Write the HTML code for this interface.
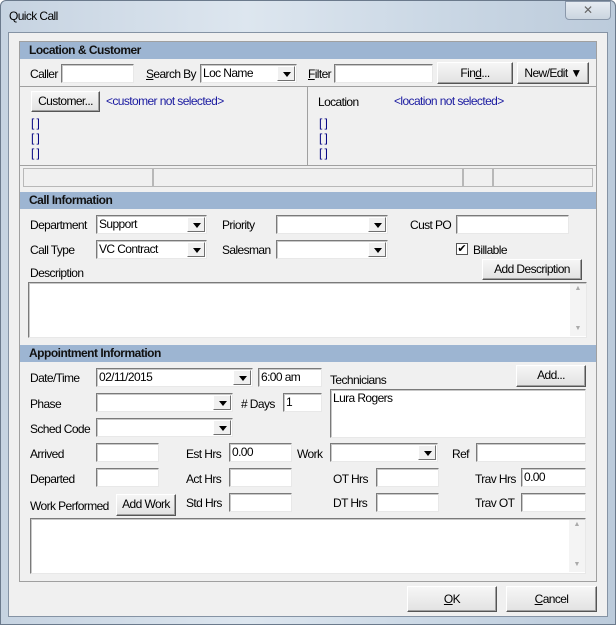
<!DOCTYPE html>
<html><head><style>
*{box-sizing:border-box;margin:0;padding:0}
body{width:616px;height:625px;overflow:hidden;background:#fff;font-family:"Liberation Sans",sans-serif;font-size:12px;color:#000;position:relative}
.a{position:absolute}
.l{position:absolute;line-height:14px;white-space:nowrap;letter-spacing:-0.6px}
.in{position:absolute;background:#fff;border:1px solid;border-color:#7a7a7a #e8e8e8 #e8e8e8 #7a7a7a;box-shadow:inset 1px 1px 0 #c8c8c8;padding:1px 2px;line-height:14px;letter-spacing:-0.6px;white-space:nowrap}
.cb:after{content:"";position:absolute;right:1px;top:1px;bottom:1px;width:16px;background:#f0f0f0;border:1px solid;border-color:#fff #707070 #707070 #fff}
.cb:before{content:"";position:absolute;right:5px;top:50%;margin-top:-2px;border-left:4px solid transparent;border-right:4px solid transparent;border-top:5px solid #000;z-index:2}
.bt{position:absolute;background:linear-gradient(#f6f6f6,#e2e2e2);border:1px solid;border-color:#fff #555 #555 #fff;box-shadow:inset -1px -1px 0 #a0a0a0;text-align:center;letter-spacing:-0.6px;white-space:nowrap}
.hd{position:absolute;left:20px;width:576px;height:17px;background:#9db5d2;font-weight:bold;padding-left:9px;line-height:17px;color:#111;letter-spacing:-0.5px}
.bl{color:#1a1aa0}
.br{color:#000080}
</style></head><body>
<div class="a" style="left:0;top:0;width:616px;height:625px;background:linear-gradient(90deg,#c6d3e1,#dde6ef 40%,#cbd8e5 70%,#bccbdb);border:1px solid #6b7a8c;border-radius:6px 6px 0 0"></div>
<div class="l" style="left:9px;top:9px;font-size:12px">Quick Call</div>
<div class="a" style="left:565px;top:1px;width:46px;height:19px;border:1px solid #8a98aa;border-radius:0 0 4px 4px;background:linear-gradient(#e6ecf2,#cbd5df);text-align:center;color:#666;font-size:12px;line-height:17px">&#10005;</div>
<div class="a" style="left:8px;top:32px;width:600px;height:585px;background:#f0f0f0;border:1px solid #8593a4"></div>
<div class="a" style="left:19px;top:41px;width:578px;height:541px;border:1px solid #a0a0a0"></div>

<div class="hd" style="top:42px">Location &amp; Customer</div>
<div class="l" style="left:30px;top:67px">Caller</div>
<div class="in" style="left:61px;top:64px;width:73px;height:19px"></div>
<div class="l" style="left:146px;top:67px"><u>S</u>earch By</div>
<div class="in cb" style="left:200px;top:64px;width:97px;height:19px">Loc Name</div>
<div class="l" style="left:308px;top:67px"><u>F</u>ilter</div>
<div class="in" style="left:334px;top:64px;width:99px;height:19px"></div>
<div class="bt" style="left:437px;top:62px;width:76px;height:22px;line-height:20px">Fin<u>d</u>...</div>
<div class="bt" style="left:517px;top:62px;width:72px;height:22px;line-height:20px">New/Edit &#9660;</div>
<div class="a" style="left:20px;top:86px;width:576px;border-top:1px solid #a0a0a0"></div>
<div class="a" style="left:307px;top:86px;height:79px;border-left:1px solid #a0a0a0"></div>
<div class="bt" style="left:31px;top:91px;width:69px;height:21px;line-height:19px">Customer...</div>
<div class="l bl" style="left:106px;top:94px">&lt;customer not selected&gt;</div>
<div class="l br" style="left:31px;top:116px;line-height:15px">[ ]<br>[ ]<br>[ ]</div>
<div class="l" style="left:318px;top:95px">Location</div>
<div class="l bl" style="left:394px;top:94px">&lt;location not selected&gt;</div>
<div class="l br" style="left:319px;top:116px;line-height:15px">[ ]<br>[ ]<br>[ ]</div>
<div class="a" style="left:20px;top:165px;width:576px;border-top:1px solid #a0a0a0"></div>
<div class="a" style="left:23px;top:168px;width:130px;height:19px;border:1px solid #b8b8b8"></div>
<div class="a" style="left:153px;top:168px;width:310px;height:19px;border:1px solid #b8b8b8"></div>
<div class="a" style="left:463px;top:168px;width:30px;height:19px;border:1px solid #b8b8b8"></div>
<div class="a" style="left:493px;top:168px;width:100px;height:19px;border:1px solid #b8b8b8"></div>

<div class="hd" style="top:192px">Call Information</div>
<div class="l" style="left:30px;top:218px">Department</div>
<div class="in cb" style="left:96px;top:215px;width:111px;height:19px">Support</div>
<div class="l" style="left:222px;top:218px">Priority</div>
<div class="in cb" style="left:276px;top:215px;width:112px;height:19px"></div>
<div class="l" style="left:410px;top:218px">Cust PO</div>
<div class="in" style="left:456px;top:215px;width:113px;height:19px"></div>
<div class="l" style="left:30px;top:243px">Call Type</div>
<div class="in cb" style="left:96px;top:240px;width:111px;height:19px">VC Contract</div>
<div class="l" style="left:222px;top:243px">Salesman</div>
<div class="in cb" style="left:276px;top:240px;width:112px;height:19px"></div>
<div class="a" style="left:456px;top:243px;width:12px;height:12px;border:1px solid #555;background:#fff;font-size:11px;line-height:10px;text-align:center">&#10004;</div>
<div class="l" style="left:473px;top:243px">Billable</div>
<div class="l" style="left:30px;top:266px">Description</div>
<div class="bt" style="left:482px;top:259px;width:100px;height:21px;line-height:19px">Add Description</div>
<div class="in" style="left:28px;top:282px;width:559px;height:56px"></div>
<div class="a" style="left:570px;top:284px;width:16px;height:52px;background:#f4f4f4;color:#aaa;font-size:7px;text-align:center;line-height:10px">&#9650;<br><br><br><br>&#9660;</div>

<div class="hd" style="top:345px">Appointment Information</div>
<div class="l" style="left:30px;top:371px">Date/Time</div>
<div class="in cb" style="left:96px;top:368px;width:157px;height:19px">02/11/2015</div>
<div class="in" style="left:258px;top:368px;width:64px;height:19px">6:00 am</div>
<div class="l" style="left:330px;top:373px">Technicians</div>
<div class="bt" style="left:516px;top:365px;width:70px;height:22px;line-height:19px">Add...</div>
<div class="l" style="left:30px;top:397px">Phase</div>
<div class="in cb" style="left:96px;top:393px;width:137px;height:19px"></div>
<div class="l" style="left:241px;top:397px"># Days</div>
<div class="in" style="left:283px;top:393px;width:39px;height:19px">1</div>
<div class="in" style="left:330px;top:389px;width:256px;height:49px">Lura Rogers</div>
<div class="l" style="left:30px;top:422px">Sched Code</div>
<div class="in cb" style="left:96px;top:418px;width:137px;height:19px"></div>
<div class="l" style="left:30px;top:447px">Arrived</div>
<div class="in" style="left:96px;top:443px;width:63px;height:19px"></div>
<div class="l" style="left:186px;top:447px">Est Hrs</div>
<div class="in" style="left:229px;top:443px;width:63px;height:19px">0.00</div>
<div class="l" style="left:297px;top:447px">Work</div>
<div class="in cb" style="left:330px;top:443px;width:108px;height:19px"></div>
<div class="l" style="left:452px;top:447px">Ref</div>
<div class="in" style="left:476px;top:443px;width:110px;height:19px"></div>
<div class="l" style="left:30px;top:472px">Departed</div>
<div class="in" style="left:96px;top:468px;width:63px;height:19px"></div>
<div class="l" style="left:186px;top:472px">Act Hrs</div>
<div class="in" style="left:229px;top:468px;width:63px;height:19px"></div>
<div class="l" style="left:333px;top:472px">OT Hrs</div>
<div class="in" style="left:376px;top:468px;width:63px;height:19px"></div>
<div class="l" style="left:475px;top:472px">Trav Hrs</div>
<div class="in" style="left:521px;top:468px;width:65px;height:19px">0.00</div>
<div class="l" style="left:30px;top:499px">Work Performed</div>
<div class="bt" style="left:116px;top:494px;width:60px;height:22px;line-height:19px">Add Work</div>
<div class="l" style="left:186px;top:496px">Std Hrs</div>
<div class="in" style="left:229px;top:493px;width:63px;height:19px"></div>
<div class="l" style="left:333px;top:496px">DT Hrs</div>
<div class="in" style="left:376px;top:493px;width:63px;height:19px"></div>
<div class="l" style="left:475px;top:496px">Trav OT</div>
<div class="in" style="left:521px;top:493px;width:65px;height:19px"></div>
<div class="in" style="left:30px;top:518px;width:556px;height:56px"></div>
<div class="a" style="left:569px;top:520px;width:16px;height:52px;background:#f4f4f4;color:#aaa;font-size:7px;text-align:center;line-height:10px">&#9650;<br><br><br><br>&#9660;</div>

<div class="bt" style="left:407px;top:586px;width:90px;height:26px;line-height:24px"><u>O</u>K</div>
<div class="bt" style="left:506px;top:586px;width:91px;height:26px;line-height:24px"><u>C</u>ancel</div>
</body></html>
